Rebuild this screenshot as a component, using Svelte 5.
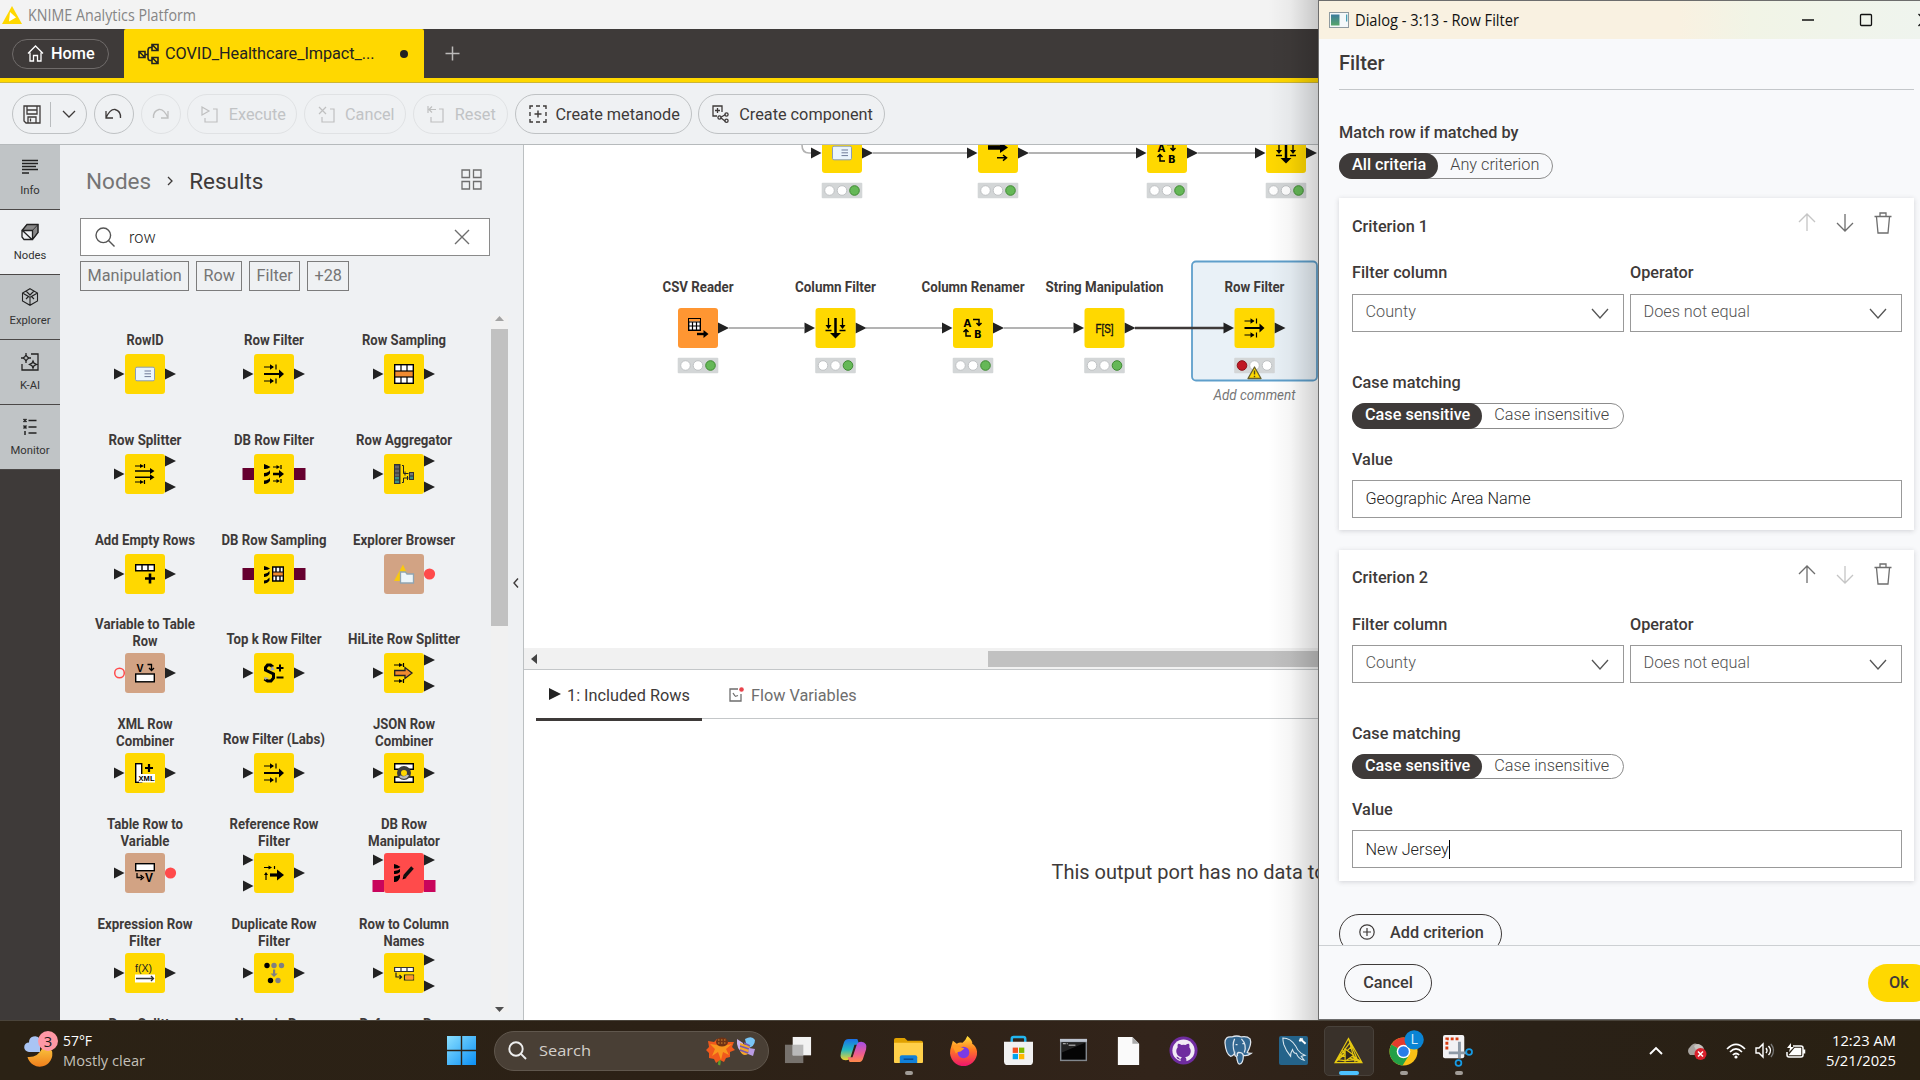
<script>
  const sections = ['Info', 'Nodes', 'Explorer', 'K-AI', 'Monitor'];
  const tags = ['Manipulation', 'Row', 'Filter', '+28'];

  // Widths are the drawn label widths, one for each line
  const repo = [
    { icon: 'rowid', label: [['RowID', 37]], ins: ['t20'], outs: ['t20'] },
    { icon: 'filter', label: [['Row Filter', 60]], ins: ['t20'], outs: ['t20'] },
    { icon: 'sampling', label: [['Row Sampling', 84]], ins: ['t20'], outs: ['t20'] },
    { icon: 'splitter', label: [['Row Splitter', 73]], ins: ['t20'], outs: ['t7', 't33'] },
    { icon: 'dbfilter', label: [['DB Row Filter', 80]], ins: ['d20'], outs: ['d20'] },
    { icon: 'aggregator', label: [['Row Aggregator', 96]], ins: ['t20'], outs: ['t7', 't33'] },
    { icon: 'addrows', label: [['Add Empty Rows', 100]], ins: ['t20'], outs: ['t20'] },
    { icon: 'dbsampling', label: [['DB Row Sampling', 105]], ins: ['d20'], outs: ['d20'] },
    { icon: 'browser', bg: '#d2a384', label: [['Explorer Browser', 102]], ins: [], outs: ['v20'] },
    { icon: 'vartorow', bg: '#d2a384', label: [['Variable to Table', 100], ['Row', 25]], ins: ['o20'], outs: ['t20'] },
    { icon: 'topk', label: [['Top k Row Filter', 95]], ins: ['t20'], outs: ['t20'] },
    { icon: 'hilite', label: [['HiLite Row Splitter', 112]], ins: ['t20'], outs: ['t7', 't33'] },
    { icon: 'xml', label: [['XML Row', 55], ['Combiner', 58]], ins: ['t20'], outs: ['t20'] },
    { icon: 'filter', label: [['Row Filter (Labs)', 102]], ins: ['t20'], outs: ['t20'] },
    { icon: 'json', label: [['JSON Row', 62], ['Combiner', 58]], ins: ['t20'], outs: ['t20'] },
    { icon: 'rowtovar', bg: '#d2a384', label: [['Table Row to', 76], ['Variable', 49]], ins: ['t20'], outs: ['v20'] },
    { icon: 'reffilter', label: [['Reference Row', 89], ['Filter', 32]], ins: ['t7', 't33'], outs: ['t20'] },
    { icon: 'dbmanip', bg: '#ff4b4b', label: [['DB Row', 46], ['Manipulator', 72]], ins: ['t7', 'p33'], outs: ['t7', 'p33'] },
    { icon: 'expr', label: [['Expression Row', 95], ['Filter', 32]], ins: ['t20'], outs: ['t20'] },
    { icon: 'dup', label: [['Duplicate Row', 85], ['Filter', 32]], ins: ['t20'], outs: ['t20'] },
    { icon: 'rowtocol', label: [['Row to Column', 90], ['Names', 41]], ins: ['t20'], outs: ['t7', 't33'] }
  ];
  // First label lines of the row that scrolls in at the bottom edge
  const next = [['Row Splitter', 73], ['Numeric Row', 79], ['Reference Row', 89]];

  const flow = [
    { x: 822, y: 133, icon: 'rowid' },
    { x: 978, y: 133, icon: 'arrows' },
    { x: 1147, y: 133, icon: 'renamer' },
    { x: 1266, y: 133, icon: 'colfilter' },
    { x: 678, y: 308, icon: 'csv', bg: '#ff9632', label: 'CSV Reader', w: 71, source: true },
    { x: 815.5, y: 308, icon: 'colfilter', label: 'Column Filter', w: 81 },
    { x: 953, y: 308, icon: 'renamer', label: 'Column Renamer', w: 103 },
    { x: 1084.5, y: 308, icon: 'string', label: 'String Manipulation', w: 118 },
    { x: 1234.5, y: 308, icon: 'filter', label: 'Row Filter', w: 60, warn: true }
  ];
  const wires = [
    [873, 967, 153], [1029, 1136, 153], [1198, 1255, 153],
    [729, 804, 328], [866, 942, 328], [1004, 1073, 328]
  ];

  const criteria = [
    { title: 'Criterion 1', value: 'Geographic Area Name', up: false, down: true },
    { title: 'Criterion 2', value: 'New Jersey', up: true, down: false, caret: true }
  ];
</script>

{#snippet glyph(name)}
  {#if name === 'rowid'}
    <rect x="0.5" y="3.2" width="19" height="13.6" rx="1.5" fill="#eaf4fc" stroke="#8a9db8" />
    <path d="M9.500 7h6.500M9.500 9.800h6.500M9.500 12.600h6.500" stroke="#6f7b98" fill="none" />
  {:else if name === 'filter'}
    <path d="M0 10h16" stroke="#000" stroke-width="2" /><path d="M15 5.500l5 4.500-5 4.500z" />
    <path d="M0 3h9M0 17h9M12 .5v5M12 14.500v5" stroke="#000" stroke-width="1.200" /><path d="M6 .3L10 3 6 5.700zM6 14.300L10 17l-4 2.700z" />
  {:else if name === 'sampling'}
    <rect x=".7" y=".7" width="18.600" height="18.600" fill="#fff" stroke="#000" stroke-width="1.400" />
    <path d="M7 1v18M13 1v18" stroke="#000" stroke-width="1.200" />
    <rect x=".7" y="7" width="18.600" height="6" fill="#f08a30" stroke="#000" stroke-width="1.200" />
  {:else if name === 'splitter'}
    <path d="M0 2h6M9.500 0v4M0 18h6M9.500 16v4" stroke="#000" stroke-width="1.200" /><path d="M5 0l4 2-4 2zM5 16l4 2-4 2z" />
    <path d="M0 7h17M0 13.200h17" stroke="#000" stroke-width="1.500" /><path d="M15 4l4.500 3-4.500 3zM15 10.200l4.500 3-4.500 3z" />
  {:else if name === 'dbfilter'}
    <path d="M0 0q3 1 6.500 3-3 2.500-6.500 2zM0 9q5-.5 6-3v3.500q-2 3-6 3zM0 16.500q5-.5 6-3v3.500q-2 3-6 3z" />
    <path d="M9 10h7" stroke="#000" stroke-width="2.500" /><path d="M15 6l5 4-5 4z" />
    <path d="M9 3h4M17 1v4M9 17h4M17 15v4" stroke="#000" stroke-width="1.200" /><path d="M12.500 1l3.500 2-3.500 2zM12.500 15l3.500 2-3.500 2z" />
  {:else if name === 'aggregator'}
    <path d="M0 0h6.500v20h-6.500z" fill="#333" /><path d="M1 1.500h4v3h-4zM1 5.500h4v3h-4zM1 9.500h4v3h-4z" fill="#666" /><path d="M1 13h4v2.600h-4zM1 16.500h4v2.600h-4z" fill="#3d8f86" />
    <path d="M8 1.500h1.500v8h5M8 18.500h1.500v-4.500h5M11 7.500v4M13.500 12v4" stroke="#222" fill="none" /><path d="M15 8h5v8h-5z" fill="#333" /><path d="M16 9h3v2.500h-3z" fill="#777" /><path d="M16 12.500h3v2.500h-3z" fill="#3d8f86" />
  {:else if name === 'addrows'}
    <path d="M.7.7h18.600v6h-18.600zM7 .7v6M13 .7v6" fill="#fff" stroke="#000" stroke-width="1.400" /><path d="M15 9.500v10M10 14.500h10" stroke="#000" stroke-width="2.600" />
  {:else if name === 'dbsampling'}
    <path d="M0 2q3 .5 6 2.500-3 2-6 1.500zM0 10q4-.5 5.500-3v3q-2 3-5.500 3zM0 16.500q4-.5 5.500-3v3q-2 3-5.500 3z" />
    <path d="M8.700 3h10.600v14h-10.600zM12 3v14M16 3v14" fill="#fff" stroke="#000" stroke-width="1.400" /><path d="M8.700 8h10.600v4h-10.600z" fill="#f08a30" stroke="#000" />
  {:else if name === 'browser'}
    <path d="M9 .5L16.500 17h-16.500z" fill="#f8c810" /><path d="M6.500 10.500v-2.500h5l1.500 2h6.500v9h-13z" fill="#edf6fa" stroke="#90a5b3" stroke-width="1.300" />
  {:else if name === 'vartorow'}
    <text class="ico" x="1.500" y="8.500" font-size="10.500">V</text><path d="M12.500 1.500h4v6M14 5l2.500 2.500L19 5" fill="none" stroke="#000" stroke-width="1.300" />
    <rect x=".7" y="11" width="18.600" height="7.800" fill="#fff" stroke="#000" stroke-width="1.400" />
  {:else if name === 'rowtovar'}
    <rect x=".7" y=".7" width="18.600" height="7" fill="#fff" stroke="#000" stroke-width="1.400" /><path d="M2 10v4.500h5M5.500 12l3 2.500-3 2.500" fill="none" stroke="#000" stroke-width="1.300" />
    <text class="ico" x="10" y="18.500" font-size="12">V</text>
  {:else if name === 'topk'}
    <path d="M9 4l-2.500-2h-3l-2 2.500v2.500l8 4v4l-2.500 3h-3.500l-3-2" fill="none" stroke="#000" stroke-width="3" /><path d="M8 3l3 4-5 .5zM0 14l5 1-4 2z" fill="#aaa" />
    <path d="M16 1.500v7M12.500 5h7M12.500 14.500h7" stroke="#000" stroke-width="2" />
  {:else if name === 'hilite'}
    <path d="M.7 7.500h10.300v-3l7 5.500-7 5.500v-3h-10.300z" fill="#f08a30" stroke="#222" stroke-width="1.300" /><path d="M0 2h6M9.500 0v4M0 18h6M9.500 16v4" stroke="#000" stroke-width="1.200" /><path d="M5 0l4 2-4 2zM5 16l4 2-4 2z" />
  {:else if name === 'xml'}
    <rect x=".7" y=".7" width="6" height="18.600" fill="#fff" stroke="#000" stroke-width="1.400" /><path d="M4 11h16v8.500h-16z" fill="#fff" /><path d="M14 1v8M10 5h8" stroke="#000" stroke-width="2.200" />
    <text class="ico" x="3.500" y="17.800" font-size="7.500" textLength="16">XML</text>
  {:else if name === 'json'}
    <path d="M.7.700h18.600v5.500h-18.600zM.7 14h18.600v5.300h-18.600z" fill="#fff" stroke="#000" stroke-width="1.400" /><circle cx="10" cy="10" r="5" fill="none" stroke="#3d3d3d" stroke-width="4" /><path d="M6 13a5 5 0 0 0 8-1" fill="none" stroke="#bbb" stroke-width="2.500" />
  {:else if name === 'reffilter'}
    <path d="M6 12h8" stroke="#000" stroke-width="3.200" /><path d="M13 6.500l7 5.500-7 5.500z" /><path d="M0 4.500h5M10.500 3v3M2 17v-6" stroke="#000" stroke-width="1.200" /><path d="M4.500 2.500l3.500 2-3.500 2zM0 12l2-3 2 3z" />
  {:else if name === 'dbmanip'}
    <path d="M0 1q3 .5 6.500 3-3 2-6.500 1.500zM0 8q4.500-.5 6-2v3q-2 2.500-6 2zM0 13.500q4.500-.5 6-2v3q-2 5-6 4.500z" /><path d="M10.500 13.500l8-9" stroke="#111" stroke-width="3.500" /><path d="M8.500 16.500l1-4 3 2.500z" />
  {:else if name === 'expr'}
    <text class="ico mono" x="0" y="9" font-size="11" textLength="17" lengthAdjust="spacingAndGlyphs">f(X)</text><path d="M0 11.500h20v8h-20z" fill="#fff" /><path d="M1 15.500h17M16 13l2.500 2.500-2.500 2.500" stroke="#333" stroke-width="1.300" fill="none" />
  {:else if name === 'dup'}
    <circle cx="3" cy="2.500" r="2.700" /><g fill="#808080"><circle cx="10" cy="2.500" r="2.700" /><circle cx="17.500" cy="2.500" r="2.700" /><circle cx="14" cy="17.500" r="2.700" /><path d="M9 6.500h2.200v4h2.500L10 14l-3.500-3.500h2.500z" /></g><circle cx="6.500" cy="17.500" r="2.700" />
  {:else if name === 'rowtocol'}
    <path d="M.6 4.500h18.800v4h-18.800zM7 4.500v4M13 4.500v4" fill="#fff" stroke="#333" stroke-width="1.200" /><path d="M2 9.500v4.500h5M5.500 12l2 2-2 2M19.500 12h-9v5h9z" fill="none" stroke="#222" stroke-width="1.200" /><path d="M11.500 12.500h8v4h-8z" fill="#ff9632" />
  {:else if name === 'arrows'}
    <path d="M0 4.500h13" stroke="#000" stroke-width="4.500" /><path d="M12-1l8 5.500-8 5.500z" /><path d="M9 14.800h9M15 12l3.500 2.800-3.500 2.800" fill="none" stroke="#000" stroke-width="1.500" />
  {:else if name === 'renamer'}
    <text class="ico wide" x="0.500" y="8.500" font-size="10">A</text><text class="ico wide" x="11" y="19.500" font-size="10">B</text>
    <path d="M10 1.500h6v6M13.500 5l2.500 2.500L18.500 5M8 18h-5v-6.500M.5 14L3 11.500 5.500 14" fill="none" stroke="#000" stroke-width="1.500" />
  {:else if name === 'colfilter'}
    <path d="M10 0v16" stroke="#000" stroke-width="2.500" /><path d="M4.500 15h11L10 20.500z" /><path d="M3 0v9M17 0v9M0 12.500h6M14 12.500h6" stroke="#000" stroke-width="1.300" /><path d="M0 7h6l-3 4zM14 7h6l-3 4z" />
  {:else if name === 'csv'}
    <path d="M.7.700h11.600v11.600h-11.600z" fill="#fff" stroke="#000" stroke-width="1.400" /><path d="M1 1h11v2.500h-11z" fill="#ff9632" /><path d="M.7 4h11.600M.7 8h11.600M4.500 4v8M8.500 4v8" stroke="#000" stroke-width="1.200" /><path d="M9 16h8" stroke="#000" stroke-width="2.400" /><path d="M15.500 12l5 4-5 4z" />
  {:else if name === 'string'}
    <text class="ico mono" x="1" y="15" font-size="12.500" textLength="18" lengthAdjust="spacingAndGlyphs" stroke="#000" stroke-width=".4">F[S]</text>
  {/if}
{/snippet}

{#snippet port(p, side)}
  {@const cy = Number(p.slice(1))}
  {#if p[0] === 't'}
    <path d={side === 'in' ? `M-11 ${cy - 5.5}L-0.500 ${cy}L-11 ${cy + 5.5}z` : `M40 ${cy - 5.5}L51 ${cy}L40 ${cy + 5.5}z`} fill="#222" />
  {:else if p[0] === 'v' || p[0] === 'o'}
    <circle cx={side === 'in' ? -5.5 : 45.5} {cy} r={p[0] === 'o' ? 4.8 : 5.6} fill={p[0] === 'o' ? 'none' : '#ff4b4b'} stroke={p[0] === 'o' ? '#ff4b4b' : 'none'} stroke-width="1.500" />
  {:else}
    <rect x={side === 'in' ? -11.5 : 40} y={cy - 6} width="11.500" height="12" fill={p[0] === 'd' ? '#66002f' : '#c9055c'} />
  {/if}
{/snippet}

{#snippet lights(x, y, on)}
  <g>
    <rect x={x - 0.3} {y} width="40.600" height="15.500" rx="1" fill="#d3d6d7" />
    {#each [7.5, 20, 32.5] as dx, i}
      <circle cx={x + dx} cy={y + 7.7} r="4.800" fill={i === on ? (on === 2 ? '#65b857' : '#c01824') : '#fff'} stroke={i === on ? (on === 2 ? '#3f8a33' : '#8c1119') : '#bfc2c4'} />
    {/each}
  </g>
{/snippet}

<div class="screen">
  <main class="app">
    <div class="titlebar">
      <svg width="20" height="18" viewBox="0 0 20 18"><path d="M10 0l10 18h-20z" fill="#ffd800" /><path d="M8 6l6 5.500-7 4z" fill="#fff" /></svg>
      <svg class="wintext" width="172" height="24"><text x="0" y="17.500" textLength="168" lengthAdjust="spacingAndGlyphs">KNIME Analytics Platform</text></svg>
    </div>

    <div class="tabs">
      <div class="homewrap">
        <button class="home">
          <svg width="17" height="17" viewBox="0 0 17 17" fill="none" stroke="#fff" stroke-width="1.300"><path d="M1 8.500L8.500 1 16 8.500M3 7.500v8.500h3.500v-5.500h4v5.500h3.500v-8.500" /></svg>
          Home
        </button>
      </div>
      <div class="tab">
        <svg width="21" height="22" viewBox="0 0 21 22" fill="none" stroke="#222" stroke-width="1.600"><path d="M1 8.500h6v6h-6zM1 8.500l6 6M14 1.500h6v6h-6zM14 1.500l6 6M14 14.500h6v6h-6zM14 14.500l6 6M7 11.500h2.500M14 4.500h-2q-2 0-2 3v7q0 3 2 3h2" /></svg>
        <span>COVID_Healthcare_Impact_...</span>
        <i class="dirty"></i>
      </div>
      <svg class="plus" width="15" height="15" viewBox="0 0 15 15" stroke="#bcbaba" stroke-width="1.500"><path d="M7.500.500v14M.5 7.500h14" /></svg>
    </div>

    <div class="toolbar">
      <button class="pill save">
        <svg width="18" height="19" viewBox="0 0 18 19" fill="none" stroke="#3e3a39" stroke-width="1.300"><path d="M1 1h16v17h-14l-2-2zM4 1v8h10v-8M5 18v-6h8v6M7.500 13.500v3M4.500 5h9" /></svg>
        <i></i>
        <svg width="14" height="8" viewBox="0 0 14 8" fill="none" stroke="#3e3a39" stroke-width="1.300"><path d="M1 1l6 6 6-6" /></svg>
      </button>
      <button class="pill round"><svg width="17" height="12" viewBox="0 0 17 12" fill="none" stroke="#3e3a39" stroke-width="1.300"><path d="M1 3v7h7M1 10Q5 1 10 1.500 16 3 15.500 10" /></svg></button>
      <button class="pill round off"><svg width="17" height="12" viewBox="0 0 17 12" fill="none" stroke="#3e3a39" stroke-width="1.300"><path d="M16 3v7h-7M16 10Q12 1 7 1.500 1 3 1.500 10" /></svg></button>
      <button class="pill exe off"><svg width="17" height="17" viewBox="0 0 17 17" fill="none" stroke="#3e3a39" stroke-width="1.200"><path d="M1 1l7 4-7 4zM12 3h4v13h-12v-4" /></svg>Execute</button>
      <button class="pill can off"><svg width="17" height="17" viewBox="0 0 17 17" fill="none" stroke="#3e3a39" stroke-width="1.200"><path d="M1 1l7 7M8 1l-7 7M12 3h4v13h-12v-5" /></svg>Cancel</button>
      <button class="pill res off"><svg width="17" height="17" viewBox="0 0 17 17" fill="none" stroke="#3e3a39" stroke-width="1.200"><path d="M1 0v7M9 3.500h-7M5 .5l-3 3 3 3M12 3h4v13h-12v-5" /></svg>Reset</button>
      <button class="pill meta"><svg width="18" height="18" viewBox="0 0 18 18" fill="none" stroke="#3e3a39" stroke-width="1.400"><path d="M1 4v-3h3M7 1h4M14 1h3v3M17 7v4M17 14v3h-3M11 17h-4M4 17h-3v-3M1 11v-4M9 5.500v7M5.500 9h7" /></svg>Create metanode</button>
      <button class="pill comp"><svg width="17" height="18" viewBox="0 0 17 18" fill="none" stroke="#3e3a39" stroke-width="1.300"><path d="M5 11h-4v-10h9v6M5.500 3v5M3 5.500h5M8.500 12.500l5-3M8.500 12.500l5 4" /><circle cx="7.500" cy="12.500" r="1.600" /><circle cx="14.500" cy="9.500" r="1.600" /><circle cx="14.500" cy="15.800" r="1.600" /></svg>Create component</button>
    </div>

    <div class="body">
      <nav>
        {#each sections as s, i}
          <div class="section" class:active={i === 1}>
            <svg width="18" height="18" viewBox="0 0 18 18" fill="none" stroke="#222" stroke-width="1.300">
              {#if i === 0}<path d="M1 2.500h16M1 5.500h16M1 8.500h14M1 11.500h16M1 15h7" stroke-width="1.700" />
              {:else if i === 1}<path d="M11.500 7.500l5.500-6v8l-5.500 7zM1 7.500l5-6h11l-5.500 6z" fill="#888" stroke="#444" stroke-width=".8" /><path d="M1 7.500h10.500v9h-8.500l-2-2.500zM1 7.500l5-6h11v8l-5.500 7M2 8l9 8.500" />
              {:else if i === 2}<path d="M9 .7l7.500 4.300v8l-7.500 4.300-7.500-4.300v-8zM1.500 5l7.500 4.300 7.500-4.300M9 9.300v8M5 3l8 8M13 3l-8 8" stroke-width="1.100" />
              {:else if i === 3}<path d="M10 1h7v16h-16v-6M5 0v2M5 8v2M0 5h2M8 5h2M5 2l1.200 1.800L8 5 6.200 6.200 5 8 3.800 6.200 2 5l1.800-1.200zM12 8l1 2.200 2.500 1.300-2.500 1.200-1 2.300-1-2.300-2.500-1.200 2.500-1.300z" />
              {:else}<path d="M7.500 2.500h8M7.500 9h8M7.500 15h8M2.500 1l3 3M5.500 1l-3 3M2.500 7.500l3 3M5.500 7.500l-3 3M4 13v4" stroke-width="1.500" />{/if}
            </svg>
            <span>{s}</span>
          </div>
        {/each}
      </nav>

      <aside>
        <div class="crumbs">
          <span class="dim">Nodes</span>
          <svg width="6" height="10" viewBox="0 0 6 10" fill="none" stroke="#3e3a39" stroke-width="1.300"><path d="M1 1l4 4-4 4" /></svg>
          <span>Results</span>
          <svg class="grid" width="21" height="21" viewBox="0 0 21 21" fill="none" stroke="#6e6e6e" stroke-width="1.300"><path d="M1 1h7.500v7.500h-7.500zM12.500 1h7.500v7.500h-7.500zM1 12.500h7.500v7.500h-7.500zM12.500 12.500h7.500v7.500h-7.500z" /></svg>
        </div>
        <div class="search">
          <svg width="20" height="20" viewBox="0 0 20 20" fill="none" stroke="#555" stroke-width="1.400"><circle cx="8.300" cy="8.300" r="7.300" /><path d="M13.500 13.500l6 6" /></svg>
          <span>row</span>
          <svg width="16" height="16" viewBox="0 0 16 16" stroke="#6e6e6e" stroke-width="1.400"><path d="M1 1l14 14M15 1l-14 14" /></svg>
        </div>
        <div class="tags">{#each tags as t}<span>{t}</span>{/each}</div>
        <div class="repo">
          <div class="nodes">
            {#each repo as n}
              <div class="node">
                <svg width="120" height="100" viewBox="-40 -60 120 100">
                  {#each n.label as l, i}
                    <text class="name" x={20 - l[1] / 2} y={n.label.length === 1 ? -9 : i === 0 ? -24.5 : -7} textLength={l[1]} lengthAdjust="spacingAndGlyphs">{l[0]}</text>
                  {/each}
                  {#each n.ins as p}{@render port(p, 'in')}{/each}
                  {#each n.outs as p}{@render port(p, 'out')}{/each}
                  <rect width="40" height="40" rx="3" fill={n.bg ?? '#ffd800'} />
                  <g transform="translate(10 10)">{@render glyph(n.icon)}</g>
                </svg>
              </div>
            {/each}
            {#each next as l}
              <div class="node">
                <svg width="120" height="40" viewBox="-40 -60 120 40"><text class="name" x={20 - l[1] / 2} y="-24.500" textLength={l[1]} lengthAdjust="spacingAndGlyphs">{l[0]}</text></svg>
              </div>
            {/each}
          </div>
          <div class="vscroll">
            <svg width="9" height="5" viewBox="0 0 9 5"><path d="M0 5l4.500-5L9 5z" fill="#a3a3a3" /></svg>
            <i></i>
            <svg width="9" height="5" viewBox="0 0 9 5"><path d="M0 0h9l-4.500 5z" fill="#505050" /></svg>
          </div>
        </div>
      </aside>
      <div class="collapse"><svg width="6" height="10" viewBox="0 0 6 10" fill="none" stroke="#3e3a39" stroke-width="1.400"><path d="M5 .5l-4 4.500 4 4.500" /></svg></div>

      <div class="work">
        <svg class="canvas" width="794" height="503" viewBox="524 145 794 503">
          <rect x="1192" y="261.500" width="125" height="119" rx="4" fill="#e9f1f7" stroke="#5f9fcb" stroke-width="1.800" />
          <path d="M802 145q0 8 7 8h4" fill="none" stroke="#b1b1b1" stroke-width="1.600" />
          {#each wires as w}<path d="M{w[0]} {w[2]}H{w[1]}" stroke="#b3b3b3" stroke-width="2" />{/each}
          <path d="M1135 328H1224" stroke="#3e3a39" stroke-width="2.400" />
          {#each flow as n}
            <g transform="translate({n.x} {n.y})">
              {#if !n.source}{@render port('t20', 'in')}{/if}
              {@render port('t20', 'out')}
              <rect width="40" height="40" rx="3" fill={n.bg ?? '#ffd800'} />
              <g transform="translate(10 10)">{@render glyph(n.icon)}</g>
              {#if n.label}<text class="name" x={20 - n.w / 2} y="-15.800" textLength={n.w} lengthAdjust="spacingAndGlyphs">{n.label}</text>{/if}
            </g>
            {@render lights(n.x, n.y + 49.8, n.warn ? 0 : 2)}
          {/each}
          <path d="M1254.500 367l6.500 11.500h-13z" fill="#ffd800" stroke="#66602f" stroke-width="1.300" stroke-linejoin="round" /><path d="M1254.500 370.500v4M1254.500 375.800v1.400" stroke="#4d4820" stroke-width="1.400" />
          <text class="comment" x="1213.500" y="400" textLength="82" lengthAdjust="spacingAndGlyphs">Add comment</text>
        </svg>
        <div class="hscroll">
          <svg width="6" height="10" viewBox="0 0 6 10"><path d="M6 0v10l-6-5z" fill="#444" /></svg>
          <i></i>
        </div>
        <div class="ports">
          <div class="ptab on"><svg width="12" height="12" viewBox="0 0 12 12"><path d="M0 0l12 6-12 6z" fill="#222" /></svg><span>1: Included Rows</span></div>
          <div class="ptab"><svg width="15" height="15" viewBox="0 0 15 15" fill="none" stroke="#6e6e6e" stroke-width="1.300"><path d="M9 2h-8v12h11v-7M4 6l2 3M9 8.500l-3 1" /><circle cx="12.500" cy="2.500" r="2.300" fill="#e8434b" stroke="none" /></svg><span>Flow Variables</span></div>
        </div>
        <div class="empty">This output port has no data to display.</div>
      </div>
    </div>
    <div class="shade"></div>
  </main>

  <section class="dialog">
    <div class="dtitle">
      <svg width="20" height="16" viewBox="0 0 20 16"><rect x=".5" y=".5" width="19" height="15" fill="#f4f8fa" stroke="#8f9aa0" /><defs><linearGradient id="win" x2="0" y2="1"><stop stop-color="#3b7a9c" /><stop offset="1" stop-color="#57a56a" /></linearGradient></defs><path d="M2 2.500h8.500v11h-8.500z" fill="url(#win)" /><path d="M17 2.500h1.300v7h-1.300z" fill="#489fb5" /></svg>
      <svg class="wintext dark" width="168" height="24"><text x="0" y="17.500" textLength="164" lengthAdjust="spacingAndGlyphs">Dialog - 3:13 - Row Filter</text></svg>
      <svg class="winbtns" width="118" height="14" viewBox="0 0 118 14" fill="none" stroke="#111" stroke-width="1.300"><path d="M0 7h12M116.500 1l12 12M116.500 13l12-12" /><rect x="58.500" y="1.500" width="11" height="11" rx="1" /></svg>
    </div>
    <div class="dbody">
      <h2>Filter</h2>
      <div class="lab match">Match row if matched by</div>
      <div class="switch"><b>All criteria</b><span>Any criterion</span></div>
      {#each criteria as c, i}
        <div class="card" class:second={i === 1}>
          <div class="chead">
            <div class="lab">{c.title}</div>
            <svg class:faint={!c.up} width="18" height="19" viewBox="0 0 18 19" fill="none" stroke="#6e6e6e" stroke-width="1.300"><path d="M9 18v-17M1 9l8-8 8 8" /></svg>
            <svg class:faint={!c.down} width="18" height="19" viewBox="0 0 18 19" fill="none" stroke="#6e6e6e" stroke-width="1.300"><path d="M9 1v17M1 10l8 8 8-8" /></svg>
            <svg width="18" height="22" viewBox="0 0 18 22" fill="none" stroke="#6e6e6e" stroke-width="1.300"><path d="M.5 4.500h17M2.500 5l1.500 16h10l1.500-16M6 4v-3h6v3" /></svg>
          </div>
          <div class="cols">
            {#each [['Filter column', 'County'], ['Operator', 'Does not equal']] as f}
              <div>
                <div class="lab">{f[0]}</div>
                <div class="select">{f[1]}<svg width="18" height="11" viewBox="0 0 18 11" fill="none" stroke="#555" stroke-width="1.300"><path d="M1 1l8 9 8-9" /></svg></div>
              </div>
            {/each}
          </div>
          <div class="lab case">Case matching</div>
          <div class="switch wide"><b>Case sensitive</b><span>Case insensitive</span></div>
          <div class="lab val">Value</div>
          <div class="input" class:caret={c.caret}><span>{c.value}</span></div>
        </div>
      {/each}
      <button class="add"><svg width="16" height="16" viewBox="0 0 16 16" fill="none" stroke="#3e3a39" stroke-width="1.200"><circle cx="8" cy="8" r="7.200" /><path d="M8 4v8M4 8h8" /></svg>Add criterion</button>
    </div>
    <div class="dfoot"><button class="cancel">Cancel</button><button class="ok">Ok</button></div>
  </section>

  <footer>
    <div class="weather">
      <svg width="36" height="38" viewBox="0 0 36 38"><defs><linearGradient id="moon" x2="0" y2="1"><stop stop-color="#f9c23c" /><stop offset="1" stop-color="#f07f1c" /></linearGradient></defs><path d="M29 19a12.500 12.500 0 0 1-24.500 6q10 1 15-9 6-1 9.500 3z" fill="url(#moon)" /><path d="M6 20a4.800 4.800 0 0 1 0-9.600 6 6 0 0 1 11-3.400v13z" fill="#a9c4f4" /><ellipse cx="25" cy="9" rx="10" ry="10" fill="#ff98a5" /><text x="25" y="14.500" text-anchor="middle" font-size="15" fill="#1b1b1b">3</text></svg>
      <svg width="90" height="44"><text x="0" y="16.500" fill="#fff" textLength="29" lengthAdjust="spacingAndGlyphs">57°F</text><text x="0" y="36.500" fill="#c4c0ba" textLength="82" lengthAdjust="spacingAndGlyphs">Mostly clear</text></svg>
    </div>
    <svg class="start" width="29" height="29" viewBox="0 0 29 29"><defs><linearGradient id="w" x2="1" y2="1"><stop stop-color="#8be0ff" /><stop offset="1" stop-color="#0a8ff5" /></linearGradient></defs><path d="M0 0h13.800v13.800h-13.800zM15.200 0h13.800v13.800h-13.800zM0 15.200h13.800v13.800h-13.800zM15.200 15.200h13.800v13.800h-13.800z" fill="url(#w)" /></svg>
    <div class="tsearch">
      <svg width="19" height="19" viewBox="0 0 19 19" fill="none" stroke="#eee" stroke-width="1.900"><circle cx="8" cy="8" r="6.700" /><path d="M12.700 12.700l5.300 5.300" /></svg>
      <svg width="56" height="24"><text x="0" y="16.500" fill="#d4d0cb" textLength="52" lengthAdjust="spacingAndGlyphs">Search</text></svg>
      <svg class="deco" width="52" height="30" viewBox="0 0 52 30">
        <path d="M13 22q1 4 0 7" stroke="#5b9a2d" stroke-width="2.500" fill="none" />
        <path d="M2 5l6 1 3-3 8-1 3 4 6 0-2 5 3 3-5 2 0 5-4 1-2 4-4-2-4 3-2-4-5-1 0-5-3-3 3-3z" fill="#f0591c" /><path d="M4 8l7 1 5 1 10-2-6 5 3 6-6-3-2 8-3-8-6 4 3-7z" fill="#fba51e" opacity=".8" /><ellipse cx="16" cy="6" rx="6" ry="4.500" fill="#6f3215" /><path d="M12 4h9M12 7h9" stroke="#d98b2e" stroke-dasharray="1.500 1.500" />
        <path d="M31 3l6 4v10q-7-4-6-14z" fill="#c9b4ec" /><path d="M39 3q7-4 10 1 0 7-8 8z" fill="#78c5f7" /><path d="M34 7l10 3-2 8q-5 3-8-3z" fill="#f5a72c" /><path d="M34 10l9 3M34 14l8 3M38 7l6 3" stroke="#7a58b0" stroke-width="1.800" /><path d="M43 12l6 1-2 7-5-2z" fill="#b99be3" />
      </svg>
    </div>
    <div class="apps">
      <div><svg viewBox="0 0 30 30"><path d="M1 9h19v19h-19z" fill="#77726d" /><path d="M9 1h19v19h-19z" fill="#f2f2f2" /><path d="M9 9h11v11h-11z" fill="#b9b9b9" /></svg></div>
      <div><svg viewBox="0 0 30 30"><defs><linearGradient id="c1" x2="0" y2="1"><stop stop-color="#1b6fe8" /><stop offset=".5" stop-color="#21b7c4" /><stop offset="1" stop-color="#f5d22d" /></linearGradient><linearGradient id="c2" x2="0" y2="1"><stop stop-color="#a44ee8" /><stop offset=".6" stop-color="#ee5d8f" /><stop offset="1" stop-color="#ff8b48" /></linearGradient></defs><path d="M10 3h9l2 6h-5l-4 13q-1 3-5 3-7 0-5-8l3-10q1-4 5-4z" fill="url(#c1)" /><path d="M20 27h-9l-2-5h5l4-12q1-4 5-4 7 1 5 8l-3 9q-1 4-5 4z" fill="url(#c2)" /></svg></div>
      <div class="run"><svg viewBox="0 0 30 30"><path d="M0 4q0-2 2-2h9l3 3h14q2 0 2 2v20h-30z" fill="#e0a100" /><path d="M0 7h30v20q0 1-1 1h-28q-1 0-1-1z" fill="#ffd04a" /><path d="M6 28v-6q0-2 2-2h14q2 0 2 2v6z" fill="#1180d8" /><path d="M10 24h10" stroke="#0a4c91" stroke-width="1.600" /></svg></div>
      <div><svg viewBox="0 0 30 30"><defs><linearGradient id="ff" x2="0" y2="1"><stop stop-color="#ffe33c" /><stop offset=".45" stop-color="#ff7a22" /><stop offset="1" stop-color="#ef146d" /></linearGradient></defs><path d="M19 0q6 5 5 8 4 2 5 8a14 14 0 1 1-27-4l2-7 4 3q3-2 6-1 3-2 5-7z" fill="url(#ff)" /><circle cx="15" cy="17" r="6" fill="#7a3be6" /><path d="M3 9l8 2 5 2-4 3q-3 0-5 2z" fill="#ff9b23" /></svg></div>
      <div><svg viewBox="0 0 30 30"><path d="M8 7v-4q0-2 2-2h10q2 0 2 2v4" fill="none" stroke="#22b5ee" stroke-width="2.500" /><path d="M0 6h30v20q0 4-4 4h-22q-4 0-4-4z" fill="#f1f1f1" /><path d="M9 12h5.500v5.500h-5.500z" fill="#f25022" /><path d="M15.500 12h5.500v5.500h-5.500z" fill="#7fba00" /><path d="M9 18.500h5.500v5.500h-5.500z" fill="#00a4ef" /><path d="M15.500 18.500h5.500v5.500h-5.500z" fill="#ffb900" /></svg></div>
      <div><svg viewBox="0 0 30 30"><path d="M1 3h28v23h-28z" fill="#82878d" /><path d="M2.500 6.500h25v18h-25z" fill="#050505" /><path d="M1 3h28v3h-28z" fill="#bcc3ce" /><path d="M4 8h3M8 8h1M10 9.500h7" stroke="#ccc" /><path d="M3 7h24l-24 10z" fill="#fff" opacity=".12" /></svg></div>
      <div><svg viewBox="0 0 30 30"><path d="M4 1h15l7 7v22h-22z" fill="#fafafa" /><path d="M19 1v7h7z" fill="#aaa" /></svg></div>
      <div><svg viewBox="0 0 30 30"><circle cx="15" cy="15" r="14.500" fill="#6f2c9f" /><circle cx="15" cy="15" r="11.500" fill="#f1ebf5" /><path d="M12 27.500v-3.500q-3 1-4.500-2.500 2 0 3 1.500t2 0l.8-1q-5.800-1-5.800-6.500 0-2 1.500-3.800-.5-2 .3-3.700 1.800 0 3.700 1.400 2-.7 4 0 1.900-1.400 3.700-1.400.8 1.700.3 3.700 1.500 1.800 1.500 3.800 0 5.500-5.800 6.500 1.300 1 1.300 2.500v3z" fill="#6f2c9f" /></svg></div>
      <div><svg viewBox="0 0 30 30" fill="#336791" stroke="#dfe6ee" stroke-width="1.300"><path d="M8 1Q1 0 1 7q1 12 6 14 2 0 4-3 0 3 2 3 1 8 3 8 4 0 4-9 4 1 8-2-3 0-4-1 5-9 3-14-3-3-9-2-5-2-10 0z" /><path d="M11 3q-3 6 0 15M18 3q6 6 3 14M14 21q-1-3 1-4 4 0 5 3M12 9h2M19 8h2" fill="none" /></svg></div>
      <div><svg viewBox="0 0 30 30"><rect width="30" height="30" rx="2" fill="#24638a" /><path d="M4 2q8 0 13 8 2 5 6 8l4 2-4 1 3 4q-6-1-8-7-3 0-4-4-2 3-2 7-5-6-7-12-1-4-1-7z" fill="none" stroke="#dce8ef" stroke-width="1.100" /><path d="M21.500 2.500l6 5.500M21 5.500l3.500-3" stroke="#fff" stroke-width="2" /></svg></div>
      <div class="current"><svg viewBox="0 0 30 30" fill="none" stroke="#e6c910" stroke-width="1.200"><path d="M15 2.500L29 27.500H1zM15 2.500L25.500 27.500M15 2.500L22 27.500M15 2.500L19 12M1 27.500L17 6M1 27.500L19.500 9.500M1 27.500L11 19M29 27.500L6 19M29 27.500L8.500 15M29 27.500L19 20M3 24.500l8 1 12-1" /><path d="M11.500 13.500l9 6.500-9 6z" fill="#2e261e" stroke="#e6c910" /></svg></div>
      <div class="run"><svg viewBox="0 0 30 30"><circle cx="15" cy="16" r="14.500" fill="#fbc116" /><path d="M15 16L2.500 8.700A14.500 14.500 0 0 1 27.500 8.700z" fill="#e33b2e" /><path d="M15 16L2.500 8.700A14.500 14.500 0 0 0 14 30.500l7-11z" fill="#23a047" /><circle cx="15" cy="16" r="7" fill="#fff" /><circle cx="15" cy="16" r="5.500" fill="#2a7de9" /><circle cx="26" cy="4" r="10" fill="#0a84d4" /><text x="26" y="8.500" text-anchor="middle" font-size="12.500" fill="#d5ecfa">L</text></svg></div>
      <div class="run snip"><svg viewBox="0 0 30 30"><rect x="0" y="0" width="22" height="24" rx="2" fill="#f2f2f4" /><path d="M4 15v-11h13" fill="none" stroke="#d83b10" stroke-width="3" stroke-dasharray="3 2" /><path d="M6 18.500h11M17 7v11.500h7M17 18.500v5.500" stroke="#8e9aa6" stroke-width="3" fill="none" /><circle cx="27" cy="17.500" r="3" fill="none" stroke="#169be5" stroke-width="1.800" /><circle cx="16" cy="29" r="3" fill="none" stroke="#169be5" stroke-width="1.800" /></svg></div>
    </div>
    <div class="tray">
      <svg class="t1" width="14" height="9" viewBox="0 0 14 9" fill="none" stroke="#fff" stroke-width="1.900"><path d="M1 8l6-6 6 6" /></svg>
      <svg class="t2" width="21" height="18" viewBox="0 0 21 18"><path d="M4 13a5 5 0 0 1 0-8q4-6 9-2 4 0 5 4v6z" fill="#a8a4a0" /><path d="M8 4q5-5 9 2l-6 4z" fill="#c8c4c0" /><circle cx="14.500" cy="12" r="6" fill="#d8202c" /><path d="M12 9.500l5 5M17 9.500l-5 5" stroke="#fff" stroke-width="1.500" /></svg>
      <svg class="t3" width="20" height="16" viewBox="0 0 20 16" fill="none" stroke="#fff" stroke-width="1.700"><path d="M1 6q9-9 18 0M4 9q6-6 12 0M6.800 12q3.200-3 6.400 0" /><circle cx="10" cy="14" r="1.600" fill="#fff" stroke="none" /></svg>
      <svg class="t4" width="20" height="17" viewBox="0 0 20 17" fill="none" stroke="#fff" stroke-width="1.400"><path d="M1 6v5h3l4 4v-13l-4 4zM11 6q2 2.500 0 5M13.500 4q4 4.500 0 9" /><path d="M16 2q5 6.500 0 13" stroke="#777" /></svg>
      <svg class="t5" width="20" height="16" viewBox="0 0 20 16" fill="none" stroke="#fff" stroke-width="1.500"><path d="M7 3h8q2 0 2 2v7q0 2-2 2h-12q-2 0-2-2v-3M18.500 6.500v4" /><path d="M9 5.500h5.500v6h-10.500z" fill="#fff" /><path d="M5 0l-4 5h3l-1 4 5-5h-3z" fill="#fff" stroke="none" /></svg>
      <svg class="clock" width="72" height="44"><text x="6" y="16.500" fill="#fff" textLength="64" lengthAdjust="spacingAndGlyphs">12:23 AM</text><text x="0" y="36.500" fill="#fff" textLength="70" lengthAdjust="spacingAndGlyphs">5/21/2025</text></svg>
    </div>
  </footer>
</div>

<style>
  :global(body) { margin: 0; overflow: hidden; }
  * { box-sizing: border-box; }
  svg { display: block; flex: none; overflow: visible; }
  button { font: inherit; color: inherit; background: none; border: 0; padding: 0; margin: 0; display: flex; align-items: center; }
  .screen { width: 1920px; height: 1080px; overflow: hidden; display: grid; grid-template: 1020px 60px / 1318px 602px; font-family: Roboto, sans-serif; font-size: 16.25px; color: #3e3a39; background: #fff; }
  .app { position: relative; min-width: 0; overflow: hidden; display: flex; flex-direction: column; }
  .shade { position: absolute; top: 0; right: 0; bottom: 0; width: 50px; background: linear-gradient(90deg, transparent, rgba(0, 0, 0, .04) 45%, rgba(0, 0, 0, .18)); }

  .titlebar { height: 29px; flex: none; background: #f3f3f3; display: flex; align-items: center; gap: 6px; padding-left: 2px; }
  .wintext text { font: 15.500px "Open Sans", sans-serif; fill: #858585; }
  .wintext.dark text { fill: #111; }
  .tabs { height: 54px; flex: none; background: #3e3a39; border-bottom: 5px solid #ffd800; display: flex; align-items: center; }
  .homewrap { width: 124px; padding-left: 12px; }
  .home { width: 97px; height: 30px; border: 1px solid #6f6b6a; border-radius: 15px; color: #fff; font-weight: 500; padding-left: 14px; gap: 7px; }
  .tab { width: 300px; height: 49px; background: #ffd800; border-radius: 2px 2px 0 0; display: flex; align-items: center; padding-left: 14px; color: #222; gap: 6px; }
  .tab span { width: 210px; white-space: nowrap; letter-spacing: -.05px; }
  .dirty { width: 8px; height: 8px; border-radius: 50%; background: #222; margin-left: 19px; }
  .plus { margin-left: 21px; }
  .toolbar { height: 63px; flex: none; background: #eff1f3; border-top: 1px solid #cdb535; border-bottom: 1px solid #b6babc; display: flex; align-items: center; padding: 1px 0 0 12px; gap: 6.750px; margin-top: -1px; position: relative; }
  .pill { height: 40px; border: 1px solid #bfc2c4; border-radius: 20px; white-space: nowrap; flex: none; font-weight: 400; }
  .off { border-color: #e0e2e4; }
  .off > svg { opacity: .27; }
  .pill.off { color: #c1c3c5; }
  .save { width: 75px; padding-left: 10px; }
  .save i { width: 1px; height: 25px; background: #b9bcbe; margin: 0 11px 0 9px; }
  .round { width: 40px; justify-content: center; }
  .exe { width: 110px; padding-left: 13px; gap: 10.500px; }
  .can { width: 102px; padding-left: 13px; gap: 10px; }
  .res { width: 95px; padding-left: 13px; gap: 11px; }
  .meta { width: 177px; padding-left: 13px; gap: 9px; }
  .comp { width: 187px; padding-left: 13px; gap: 10px; }

  .body { flex: 1; min-height: 0; display: flex; }
  nav { width: 60px; background: #3e3a39; flex: none; }
  .section { height: 65px; background: #c0c4c6; border-bottom: 1.500px solid #4b4847; display: flex; flex-direction: column; align-items: center; padding-top: 13px; gap: 8px; font-size: 11.250px; line-height: 13px; color: #333; }
  .section.active { background: #eff1f3; }
  aside { width: 450px; flex: none; background: #eff1f3; display: flex; flex-direction: column; }
  .crumbs { height: 73px; display: flex; align-items: center; padding: 0 28px 2px 26px; font-size: 22.500px; }
  .crumbs span + svg { margin-left: 16px; }
  .crumbs svg + span { margin-left: 16px; }
  .crumbs .dim { color: #757575; }
  .crumbs .grid { margin-left: auto !important; margin-top: -3px; }
  .search { height: 38px; width: 410px; margin-left: 20px; background: #fff; border: 1.500px solid #8a8a8a; display: flex; align-items: center; padding: 0 19px 0 14px; flex: none; }
  .search span { margin-left: 14px; flex: 1; font-weight: 300; color: #222; }
  .tags { display: flex; gap: 6.600px; padding: 5px 0 0 20px; }
  .tags span { height: 30px; line-height: 28px; border: 1.500px solid #7c7c7c; padding: 0 6.500px; color: #757575; }
  .repo { flex: 1; min-height: 0; overflow: hidden; display: flex; padding-top: 3px; }
  .nodes { display: grid; grid-template-columns: 129.500px 129.500px 129.500px; grid-auto-rows: 99.840px; padding-left: 20px; width: 431px; height: 100%; }
  .node { display: flex; justify-content: center; }
  .name { font: 700 14.800px Roboto, sans-serif; fill: #3e3a39; }
  .ico { font-family: "Liberation Sans", sans-serif; font-weight: 700; fill: #000; }
  .ico.wide { font-family: "DejaVu Sans", sans-serif; }
  .ico.mono { font-weight: 400; fill: #222; }
  .vscroll { width: 17px; height: 696px; margin-top: 22px; display: flex; flex-direction: column; align-items: center; justify-content: space-between; background: #f1f1f1; }
  .vscroll i { width: 17px; height: 297px; background: #c1c1c1; margin: 8px 0 auto; }
  .collapse { width: 14px; flex: none; background: #eff1f3; border-right: 1.500px solid #bcc0c2; padding: 433px 0 0 3px; }
  .work { flex: 1; min-width: 0; background: #fff; display: flex; flex-direction: column; overflow: hidden; }
  .canvas { overflow: hidden; }
  .comment { font: italic 400 15.500px Roboto, sans-serif; fill: #777; }
  .hscroll { height: 22px; flex: none; background: #f1f1f1; border-bottom: 1.500px solid #c4c7c9; display: flex; align-items: center; padding-left: 7px; }
  .hscroll i { height: 16px; width: 330px; background: #c1c1c1; margin-left: auto; }
  .ports { height: 49px; flex: none; margin-left: 12px; border-bottom: 1px solid #c4c7c9; display: flex; gap: 13px; }
  .ptab { display: flex; align-items: center; gap: 7px; height: 51px; padding: 0 12px 3px 14px; color: #6e6e6e; white-space: nowrap; }
  .ptab span { padding-top: 3px; }
  .ptab.on { width: 166px; color: #3e3a39; border-bottom: 3px solid #3e3a39; padding-bottom: 0; padding-left: 13px; gap: 6px; }
  .empty { margin: 141px 0 0 527.500px; font-size: 20px; line-height: 24px; white-space: nowrap; }

  .dialog { position: relative; min-width: 0; overflow: hidden; border: solid #6d6d6d; border-width: 1px 0 1px 1px; background: #f8f9fb; display: flex; flex-direction: column; }
  .dtitle { height: 38px; flex: none; background: linear-gradient(90deg, #f9f1e1 0, #f9f1e1 60%, #f1f4e6 72%, #eff4ee 100%); display: flex; align-items: center; padding-left: 10px; gap: 6px; }
  .winbtns { margin-left: 273px; }
  .dbody { flex: 1; min-height: 0; overflow: hidden; padding: 0 6px 0 20px; }
  h2 { margin: 0; height: 51px; border-bottom: 1.500px solid #c4c7ca; font-size: 20px; font-weight: 500; line-height: 48px; }
  .lab { font-weight: 500; line-height: 22px; height: 20px; white-space: nowrap; }
  .match { padding-top: 32px; height: 63px; }
  .switch { display: inline-flex; height: 25.500px; border: 1.300px solid #8c8c8c; border-radius: 13px; line-height: 22px; font-weight: 300; vertical-align: top; color: #444; }
  .switch b { font-weight: 500; color: #fff; background: #3e3a39; border-radius: 13px; padding: 0 12px 0 13px; margin: -1px 0 -1px -1px; line-height: 24px; }
  .switch span { padding: 0 13px 0 12px; }
  .switch.wide span { padding-right: 14px; }
  .card { height: 332px; margin-top: 19.500px; background: #fff; box-shadow: 0 1px 5px rgba(60, 60, 70, .2); padding: 0 12px 0 13px; }
  .chead { display: flex; height: 64px; padding: 0 10px 13px 0; align-items: center; gap: 20px; }
  .chead .lab { flex: 1; height: 22px; padding-top: 3px; }
  .chead svg { margin-top: -2px; }
  .faint { opacity: .4; }
  .cols { display: grid; grid-template-columns: 272px 272px; gap: 6px; }
  .select, .input { height: 38px; border: 1.500px solid #999; background: #fff; display: flex; align-items: center; padding: 0 14px 3px 12.500px; font-weight: 300; color: #555; }
  .select { margin-top: 12px; justify-content: space-between; }
  .second .select { margin-top: 11px; }
  .select svg { margin-top: 4px; }
  .case { padding-top: 40px; height: 71px; }
  .val { padding-top: 20px; height: 51px; }
  .input { color: #222; padding-bottom: 0; }
  .caret span { border-right: 1.500px solid #000; }
  .second { height: 331.500px; }
  .add { width: 163px; height: 40px; border: 1.300px solid #3e3a39; border-radius: 20px; margin-top: 32.500px; padding: 0 0 3px 19px; gap: 15px; font-weight: 500; white-space: nowrap; }
  .dfoot { height: 74px; flex: none; border-top: 1.500px solid #cdd0d3; background: #f8f9fb; display: flex; align-items: center; justify-content: space-between; padding-left: 25px; font-weight: 500; }
  .cancel { width: 88px; height: 38px; border: 1.500px solid #3e3a39; border-radius: 19px; justify-content: center; }
  .ok { width: 64px; height: 38px; background: #ffd800; border-radius: 19px; padding-left: 21px; margin-right: -12px; }

  footer { grid-column: 1 / 3; background: linear-gradient(90deg, #2b2215, #2c2116 35%, #32241a 60%, #2a2117 80%, #292012); border-top: 1px solid #4a443b; display: flex; align-items: center; overflow: hidden; }
  footer text { font-family: "Open Sans", sans-serif; font-size: 14.800px; }
  .weather { width: 447px; display: flex; padding-left: 23px; gap: 4px; align-items: center; }
  .tsearch { width: 275px; height: 40px; margin-left: 18px; border: 1px solid #60574d; border-radius: 20px; background: #493f35; display: flex; align-items: center; padding-left: 13px; gap: 12px; flex: none; }
  .tsearch .deco { margin-left: 99px; }
  .apps { display: flex; margin-left: 2px; }
  .apps div { width: 55.050px; height: 60px; display: flex; align-items: center; justify-content: center; position: relative; }
  .apps svg { width: 29px; height: 29px; margin-top: -1px; }
  .apps .snip svg { margin: -3px 3px 0 0; }
  .run::after, .current::after { content: ""; position: absolute; left: 23.500px; bottom: 6px; width: 8px; height: 4px; border-radius: 2px; background: #a19c97; }
  .apps .current { width: 50px; height: 50px; margin: 5px 2.500px; border: 1px solid #48413a; border-radius: 5px; background: #39312a; }
  .current::after { left: 14px; width: 20px; bottom: 0; background: #4cc2ff; }
  .tray { display: flex; align-items: center; margin-left: 162px; }
  .t2 { margin-left: 23px; }
  .t3 { margin-left: 19px; }
  .t4 { margin-left: 9px; }
  .t5 { margin-left: 11px; }
  .clock { margin-left: 20px; }
</style>
